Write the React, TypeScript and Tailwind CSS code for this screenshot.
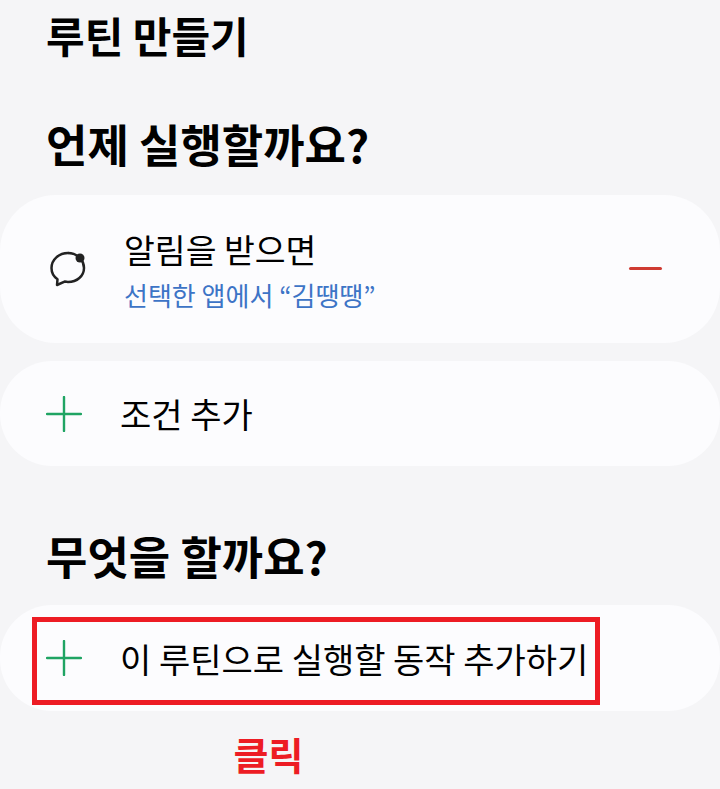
const font = "font-['Noto_Sans_CJK_KR','Noto_Sans',sans-serif]";

function Plus() {
  return (
    <svg width="36" height="36" viewBox="0 0 36 36" className="shrink-0">
      <path d="M1 18H35M18 1V35" stroke="#1fa463" strokeWidth="2.4" strokeLinecap="round" />
    </svg>
  );
}

function Bubble() {
  return (
    <svg width="40" height="40" viewBox="0 0 40 40" className="shrink-0">
      <path
        d="M21 4C12 4 4.500 10.500 4.500 19c0 4.800 2.300 8.700 6 11.200L10 36l7.600-3.400c1.100.2 2.200.4 3.400.4 9 0 16-6 16-14 0-3.500-1.200-6.800-3.400-9.400"
        fill="none"
        stroke="#222"
        strokeWidth="2.500"
        strokeLinejoin="round"
        strokeLinecap="round"
      />
      <path d="M21 4c4 0 7.500 1.200 10 3.500" fill="none" stroke="#222" strokeWidth="2.500" />
      <circle cx="33" cy="9" r="4.500" fill="#222" />
    </svg>
  );
}

export default function App() {
  return (
    <div className={`relative w-[720px] h-[789px] overflow-hidden bg-[#f5f5f7] text-black ${font}`}>
      <div className="relative flex flex-col">
        <h1 className="pl-[46px] pt-[5px] h-[85px] text-[42px] leading-[60px] font-bold">루틴 만들기</h1>
        <h2 className="pl-[46px] pt-[27px] h-[110px] text-[45px] leading-[64px] font-bold">언제 실행할까요?</h2>
        <div className="h-[148px] rounded-[56px] bg-[#fcfcfe] flex items-center pl-[47px] pr-[58px]">
          <Bubble />
          <div className="ml-[37px] flex-1 flex flex-col">
            <span className="text-[33.500px] leading-[48px]">알림을 받으면</span>
            <span className="mt-[4px] text-[26px] leading-[36px] text-[#3d74c6]">선택한 앱에서 “김땡땡”</span>
          </div>
          <div className="w-[33px] h-[3px] mt-[-2px] rounded-full bg-[#cf3b32]" />
        </div>
        <div className="mt-[18px] h-[105px] rounded-[52px] bg-[#fcfcfe] flex items-center pl-[46px]">
          <Plus />
          <span className="ml-[38px] pt-[1px] text-[34px] leading-[48px]">조건 추가</span>
        </div>
        <h2 className="pl-[46px] pt-[58px] h-[139px] text-[45px] leading-[64px] font-bold">무엇을 할까요?</h2>
        <div className="h-[106px] rounded-[52px] bg-[#fcfcfe] flex items-center pl-[46px]">
          <Plus />
          <span className="ml-[38px] pt-[1px] text-[34px] leading-[48px]">이 루틴으로 실행할 동작 추가하기</span>
        </div>
        <div className="mt-[19px] text-center w-[537px] text-[38px] leading-[48px] font-bold text-[#ed1c24]">클릭</div>
      </div>
      <div className="absolute left-[32px] top-[617px] w-[568px] h-[88px] border-[5px] border-[#ed1c24]" />
    </div>
  );
}
